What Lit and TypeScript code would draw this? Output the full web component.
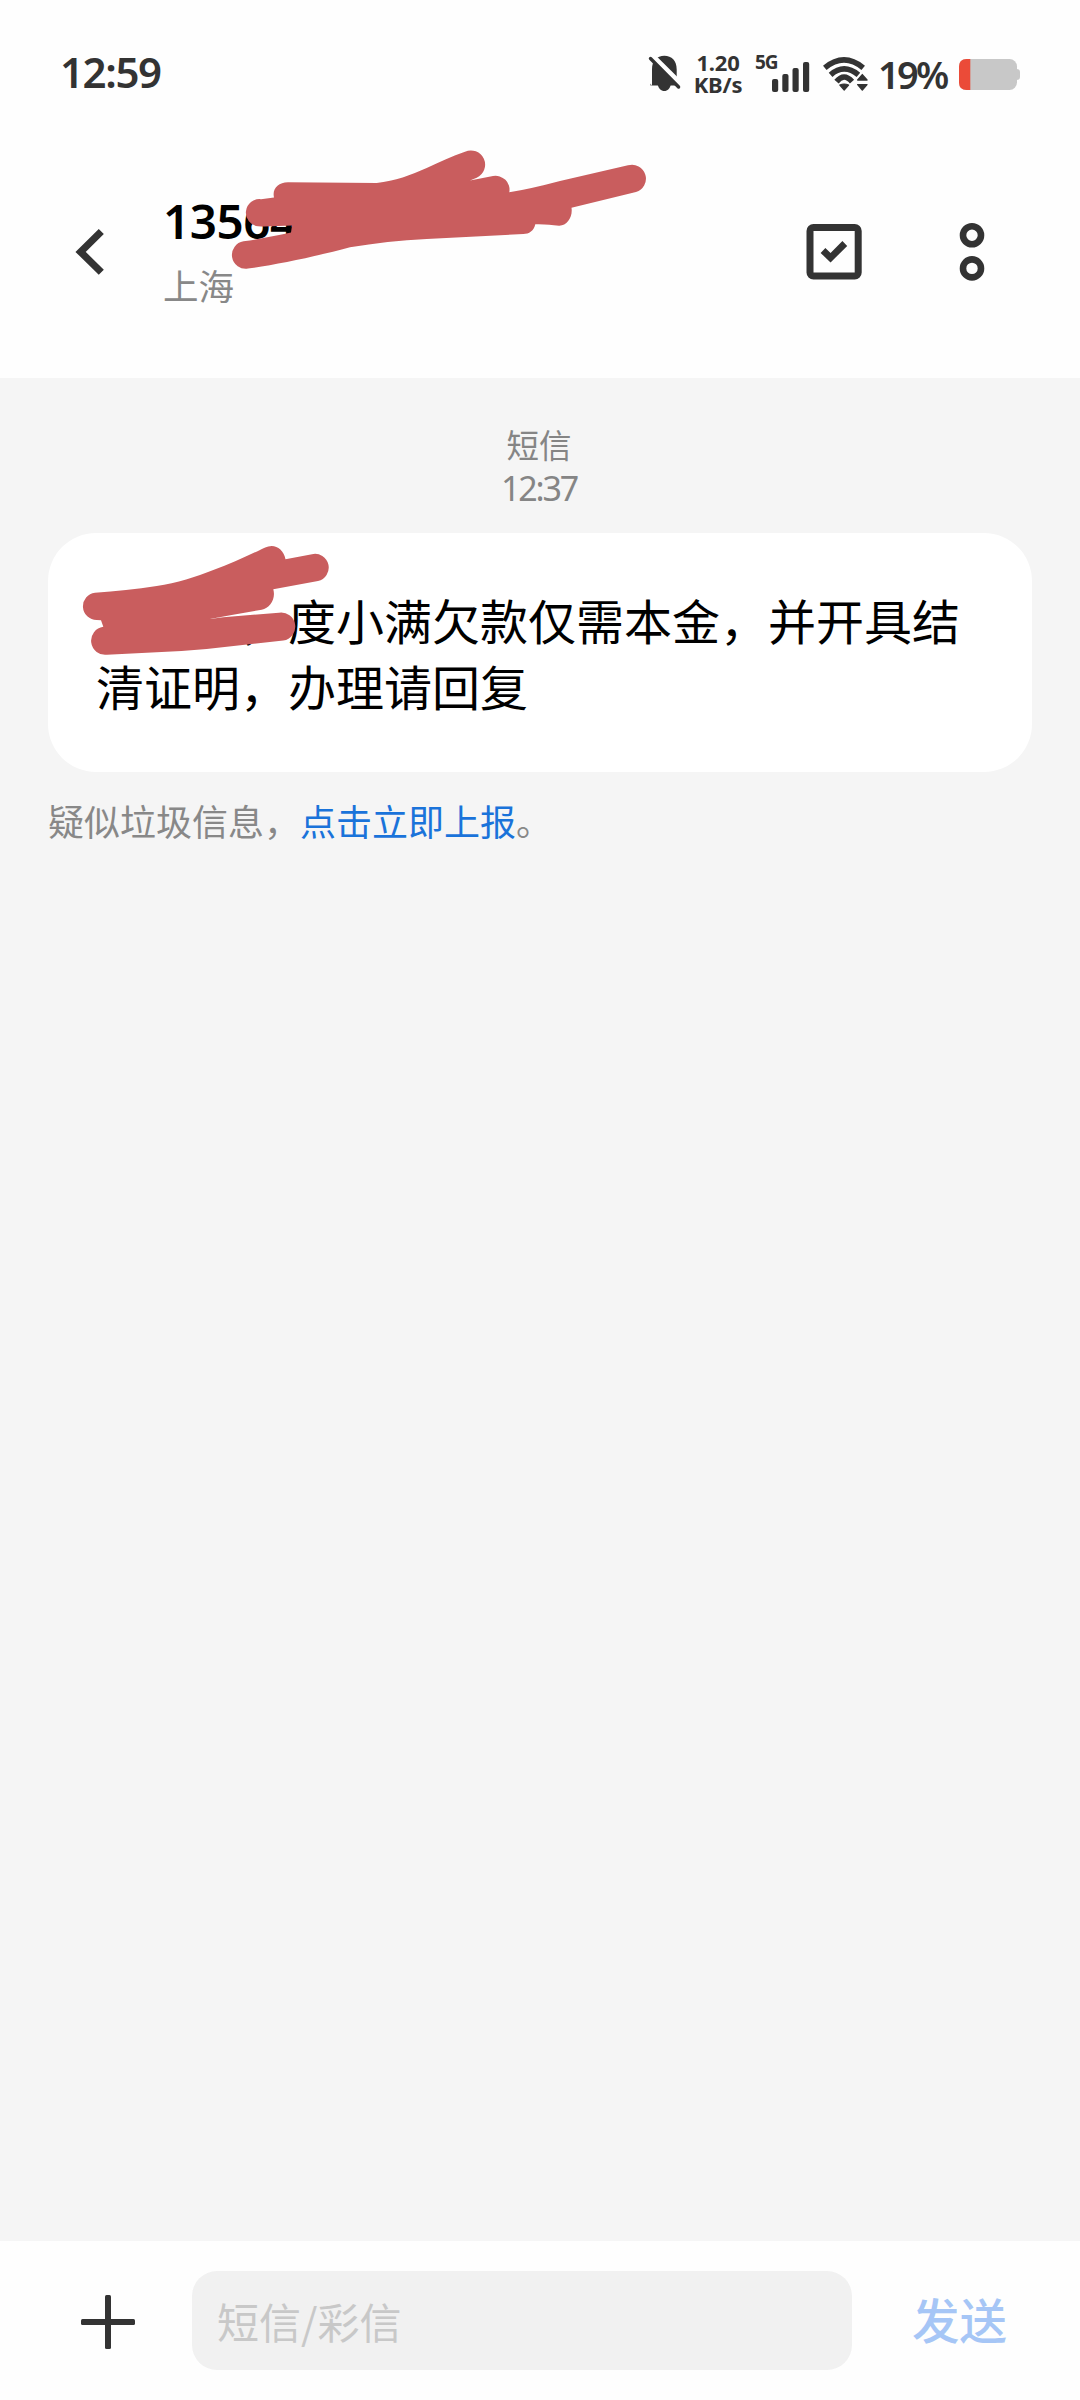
import { LitElement, html, css, svg } from "lit";
import { customElement, property } from "lit/decorators.js";

const bell = svg`
  <path d="M3 31 V14.500 C3 5.500 8 .7 15.300 .7 C22.700 .7 27.700 5.500 27.700 14.500 V25 L31 30 V30.500 H1.500 V28.500 Z" fill="#333"/>
  <path d="M8.500 29 H22 C21 33.500 18.500 36 15.300 36 C12 36 9.500 33.500 8.500 29 Z" fill="#333"/>
  <path d="M1 -1.700 L34 31" stroke="#fefefe" stroke-width="5"/>
  <path d="M1.500 3.500 L29.600 32" stroke="#333" stroke-width="3.400" stroke-linecap="round"/>`;

const bars = svg`
  <g fill="#333">
    <rect x="0" y="17" width="6.200" height="13" rx="2"/>
    <rect x="10.300" y="12" width="6.200" height="18" rx="2"/>
    <rect x="20.500" y="6" width="6.200" height="24" rx="2"/>
    <rect x="31" y="0" width="6.200" height="30" rx="2"/>
  </g>`;

const wifi = svg`
  <g fill="none" stroke="#333" stroke-width="5.600">
    <path d="M1.800 10.800 Q21 -5 40.200 10.800"/>
    <path d="M7.600 17.800 Q21 6 35.400 17.800"/>
    <path d="M13.500 24.600 Q21 15.500 29 24.600"/>
  </g>
  <g fill="#333" stroke="#333" stroke-width="1.200" stroke-linejoin="round">
    <path d="M16.800 28 Q21 26 25.600 28 L21.200 33 Z"/>
  </g>
  <g fill="#333" stroke="#333" stroke-width="1.400" stroke-linejoin="round">
    <path d="M39.300 17.600 L44 23 H34.700 Z M34.700 27.600 H44 L39.300 33 Z"/>
  </g>`;

const battery = svg`
  <path d="M54 10 H57.500 Q61 10 61 13 V18 Q61 21 57.500 21 H54 Z" fill="#c8c8c8"/>
  <rect x="0" y="0" width="58" height="31" rx="7.500" fill="#c8c8c8"/>
  <path d="M11.300 0 H7.500 Q0 0 0 7.500 V23.500 Q0 31 7.500 31 H11.300 Z" fill="#eb4b38"/>`;

@customElement("status-bar")
export class StatusBar extends LitElement {
  static styles = css`
    :host {
      display: block;
      flex: none;
    }
    .bar {
      display: flex;
      align-items: flex-start;
      height: 126px;
      padding: 0 60px 0 60px;
      box-sizing: border-box;
      color: #333;
      font-family: "Noto Sans", "Open Sans", sans-serif;
      white-space: nowrap;
    }
    svg {
      display: block;
      overflow: visible;
      flex: none;
    }
    .time {
      flex: 1;
      margin-top: 42px;
      font-size: 42px;
      font-weight: 600;
      line-height: 60px;
      letter-spacing: -1.400px;
    }
    .bell {
      margin: 55px 11px 0 0;
    }
    .speed {
      width: 52px;
      margin: 52px 3px 0 0;
      font-size: 22px;
      font-weight: 700;
      line-height: 21.500px;
      text-align: center;
      letter-spacing: -0.2px;
    }
    .net {
      width: 22px;
      margin: 50px 0 0 8px;
      font-size: 19px;
      font-weight: 700;
      line-height: 24px;
      letter-spacing: -1px;
    }
    .bars {
      margin: 62px 14px 0 -5px;
    }
    .wifi {
      margin: 57px 10px 0 0;
    }
    .percent {
      width: 81px;
      margin-top: 48px;
      font-size: 38px;
      font-weight: 600;
      line-height: 52px;
      letter-spacing: -2.700px;
    }
    .battery {
      margin-top: 59px;
    }
  `;

  render() {
    return html`<div class="bar">
      <div class="time">12:59</div>
      <svg class="bell" width="32" height="37">${bell}</svg>
      <div class="speed"><div>1.20</div><div>KB/s</div></div>
      <div class="net">5G</div>
      <svg class="bars" width="37" height="30">${bars}</svg>
      <svg class="wifi" width="45" height="34">${wifi}</svg>
      <div class="percent">19%</div>
      <svg class="battery" width="61" height="31">${battery}</svg>
    </div>`;
  }
}

@customElement("chat-header")
export class ChatHeader extends LitElement {
  @property() name = "";
  @property() place = "";

  static styles = css`
    :host {
      display: block;
      flex: none;
    }
    .header {
      position: relative;
      display: flex;
      align-items: center;
      height: 252px;
      padding: 0 95px 0 75px;
      box-sizing: border-box;
    }
    svg {
      display: block;
      flex: none;
      overflow: visible;
    }
    .who {
      flex: 1;
      margin: 0 0 6px 58px;
    }
    .name {
      color: #000;
      font: 600 47.500px/64px "Noto Sans", sans-serif;
      letter-spacing: -0.4px;
    }
    .place {
      margin-top: 8px;
      color: #888;
      font: 400 35.500px/48px "Noto Sans CJK SC", sans-serif;
    }
    .more {
      margin-left: 97px;
    }
    .scribble {
      position: absolute;
      left: 0;
      top: -126px;
    }
  `;

  render() {
    return html`<div class="header">
      <svg width="30" height="48" viewBox="75 228 30 48">
        <path d="M101.300 231.500 L80.600 251.900 L101.300 272.300" fill="none" stroke="#333" stroke-width="7.200"/>
      </svg>
      <div class="who">
        <div class="name">${this.name}</div>
        <div class="place">${this.place}</div>
      </div>
      <svg width="56" height="56" viewBox="806 224 56 56">
        <rect x="810" y="227.500" width="48.200" height="48.500" rx="3.500" fill="none" stroke="#333" stroke-width="7"/>
        <path d="M823 250.500 L830.500 257.800 L844.800 243.500" fill="none" stroke="#333" stroke-width="6.800"/>
      </svg>
      <svg class="more" width="26" height="60" viewBox="959 222 26 60">
        <g fill="none" stroke="#333" stroke-width="6.600">
          <circle cx="972" cy="235.300" r="9"/>
          <circle cx="972" cy="268.400" r="9"/>
        </g>
      </svg>
      <svg class="scribble" width="1080" height="378">
        <path fill="#c95d5e" d="M243.500 241.300 C260 239 275 236 291 232.500 L292 225.500
          C280 225.500 270 227 258 226.300 A13.600 13.600 0 0 1 261 199.200 L274 197.600
          C272 189 278 182.300 288 182.300 L376.700 183 C395 181 411 175 426.700 168
          C440 162 452 156 465 151.700 A13.700 13.700 0 0 1 476.700 177.700 L470 180.500
          L493 176 A14 14 0 0 1 509.300 192.300 Q530 189 560 181 L628 165.300
          A13.800 13.800 0 0 1 636 192 L571.500 207.700 C573 217 567 226 559 225.700
          C551 225 545 224 535.300 224.300 C534 231 529 234 523.300 234 L426.700 239
          C400 240.500 375 243 350 247.300 C318 256 275 265 248 268.600
          A13.700 13.700 0 0 1 243.500 241.300 Z"/>
      </svg>
    </div>`;
  }
}

@customElement("message-thread")
export class MessageThread extends LitElement {
  @property() text = "";

  static styles = css`
    :host {
      display: block;
      flex: 1;
      background: #f5f5f5;
    }
    .thread {
      display: flex;
      flex-direction: column;
      padding: 44px 48px 0;
      font-family: "Noto Sans CJK SC", sans-serif;
    }
    .kind,
    .when {
      color: #858585;
      text-align: center;
      line-height: 44px;
    }
    .kind {
      padding-right: 2px;
      font-size: 32.500px;
    }
    .when {
      padding-right: 2px;
      font-family: "Noto Sans", sans-serif;
      font-size: 34px;
      letter-spacing: -2.200px;
    }
    .bubble {
      position: relative;
      margin-top: 23px;
      padding: 53px 48px 54px 48px;
      border-radius: 48px;
      background: #fff;
      color: #000;
      font-size: 48px;
      line-height: 66px;
    }
    .scribble {
      position: absolute;
      left: 0;
      top: 0;
      display: block;
    }
    .note {
      margin-top: 26px;
      color: #888;
      font-size: 36px;
      line-height: 44px;
    }
    .link {
      color: #1a73da;
    }
  `;

  render() {
    return html`<div class="thread">
      <div class="kind">短信</div>
      <div class="when">12:37</div>
      <div class="bubble">${this.text}<svg class="scribble" width="300" height="140" viewBox="48 533 300 140">
          <path fill="#c95d5e" d="M95 592.700 C116 591 136 589.500 156.700 586 C177 583 196 577 213.300 570
            C230 564 245 557 260 550 C263 548.500 267 546 271.700 546 C278 546 284 551 285.500 559.300
            L312 554.200 A13.700 13.700 0 0 1 318 581 L273.300 589.300 C276 599 270 608 261.700 609.700
            L231.700 615 L210 619 L223.300 617.300 L279 612.700 A13.900 13.900 0 0 1 283.300 640.600
            L206.700 649 C173 652 140 653 107 654.700 A13.900 13.900 0 0 1 103.300 626.800
            L101 620.300 L96.700 620 A13.700 13.700 0 0 1 95 592.700 Z"/>
        </svg></div>
      <div class="note">疑似垃圾信息，<span class="link">点击立即上报</span>。</div>
    </div>`;
  }
}

@customElement("compose-bar")
export class ComposeBar extends LitElement {
  static styles = css`
    :host {
      display: block;
      flex: none;
    }
    .bar {
      display: flex;
      align-items: center;
      height: 159px;
      padding: 0 0 0 81px;
      box-sizing: border-box;
      font-family: "Noto Sans CJK SC", sans-serif;
    }
    .plus {
      display: block;
      margin-top: 3px;
    }
    .field {
      width: 660px;
      height: 99px;
      margin-left: 57px;
      padding-left: 25px;
      box-sizing: border-box;
      border-radius: 25px;
      background: #f1f1f1;
      color: #c8c8c8;
      font-size: 42px;
      font-weight: 400;
      line-height: 99px;
    }
    .send {
      margin: -4px 0 0 60px;
      color: #a6c6f6;
      font-size: 47.500px;
      font-weight: 500;
      line-height: 96px;
    }
  `;

  render() {
    return html`<div class="bar">
      <svg class="plus" width="54" height="54">
        <rect x="24" y="0" width="6" height="54" rx="1.500" fill="#333"/>
        <rect x="0" y="24" width="54" height="6" rx="1.500" fill="#333"/>
      </svg>
      <div class="field">短信/彩信</div>
      <div class="send">发送</div>
    </div>`;
  }
}

@customElement("app-root")
export class AppRoot extends LitElement {
  static styles = css`
    :host {
      display: block;
    }
    .screen {
      display: flex;
      flex-direction: column;
      width: 1080px;
      height: 2400px;
      overflow: hidden;
      background: #fefefe;
    }
  `;

  render() {
    return html`<div class="screen">
      <status-bar></status-bar>
      <chat-header name="13564" place="上海"></chat-header>
      <message-thread text="　　　，度小满欠款仅需本金，并开具结清证明，办理请回复"></message-thread>
      <compose-bar></compose-bar>
    </div>`;
  }
}
